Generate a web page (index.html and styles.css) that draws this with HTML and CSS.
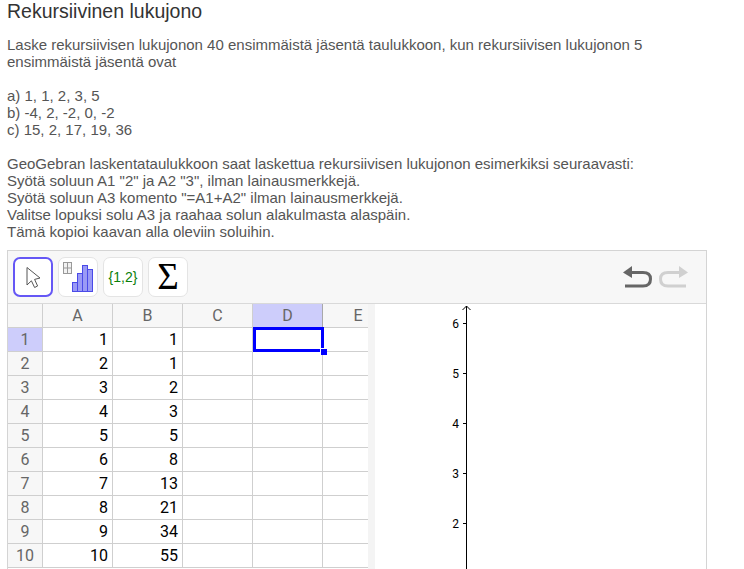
FILE: index.html
```html
<!DOCTYPE html>
<html lang="fi">
<head>
<meta charset="utf-8">
<title>Rekursiivinen lukujono</title>
<link rel="stylesheet" href="styles.css">
</head>
<body>
<h1 class="title">Rekursiivinen lukujono</h1>
<p class="para">Laske rekursiivisen lukujonon 40 ensimmäistä jäsentä taulukkoon, kun rekursiivisen lukujonon 5 ensimmäistä jäsentä ovat</p>
<p class="para">a) 1, 1, 2, 3, 5<br>b) -4, 2, -2, 0, -2<br>c) 15, 2, 17, 19, 36</p>
<p class="para">GeoGebran laskentataulukkoon saat laskettua rekursiivisen lukujonon esimerkiksi seuraavasti:<br>Syötä soluun A1 "2" ja A2 "3", ilman lainausmerkkejä.<br>Syötä soluun A3 komento "=A1+A2" ilman lainausmerkkejä.<br>Valitse lopuksi solu A3 ja raahaa solun alakulmasta alaspäin.<br>Tämä kopioi kaavan alla oleviin soluihin.</p>
<section class="applet">
  <div class="toolbar">
    <div class="tools">
      <button class="tool tool-active" aria-label="Move">
        <svg width="24" height="24" viewBox="0 0 24 24"><path d="M6 2.5 L6 20 L10.4 15.8 L13.6 22.5 L16.6 21 L13.6 14.4 L19 13 Z" fill="#fff" stroke="#555" stroke-width="1" stroke-linejoin="miter"/></svg>
      </button>
      <button class="tool" aria-label="Chart">
        <svg width="38" height="38" viewBox="0 0 38 38">
          <g fill="#f2f2f2" stroke="#999" stroke-width="1"><rect x="4.5" y="4.5" width="8" height="11"/><path d="M8.5 4.5V15.5M4.5 10H12.5"/></g>
          <g fill="#9a9af5" stroke="#4a4ae8" stroke-width="1"><rect x="13.5" y="24.5" width="5" height="9"/><rect x="18.5" y="15.5" width="5" height="18"/><rect x="23.5" y="7.5" width="5" height="26"/><rect x="28.5" y="11.5" width="5" height="22"/></g>
        </svg>
      </button>
      <button class="tool tool-list">{1,2}</button>
      <button class="tool tool-sum">Σ</button>
    </div>
    <div class="history">
      <svg width="30" height="26" viewBox="0 0 30 26"><path d="M9 8.5H21Q28.5 8.5 28.5 15Q28.5 22 21 22H3" fill="none" stroke="#666" stroke-width="3"/><path d="M1 8.5L10 2V14Z" fill="#666"/></svg>
      <svg width="30" height="26" viewBox="0 0 30 26"><path d="M21 8.5H9Q1.5 8.5 1.5 15Q1.5 22 9 22H27" fill="none" stroke="#d0d0d0" stroke-width="3"/><path d="M29 8.5L20 2V14Z" fill="#d0d0d0"/></svg>
    </div>
  </div>
  <div class="panes">
    <div class="sheet">
      <div class="row row-head">
        <div class="corner"></div><div class="ch">A</div><div class="ch">B</div><div class="ch">C</div><div class="ch ch-sel">D</div><div class="ch ch-last">E</div>
      </div>
      <div class="row"><div class="rh rh-sel">1</div><div class="c">1</div><div class="c">1</div><div class="c"></div><div class="c c-sel"></div><div class="c c-last"></div></div>
      <div class="row"><div class="rh">2</div><div class="c">2</div><div class="c">1</div><div class="c"></div><div class="c"></div><div class="c c-last"></div></div>
      <div class="row"><div class="rh">3</div><div class="c">3</div><div class="c">2</div><div class="c"></div><div class="c"></div><div class="c c-last"></div></div>
      <div class="row"><div class="rh">4</div><div class="c">4</div><div class="c">3</div><div class="c"></div><div class="c"></div><div class="c c-last"></div></div>
      <div class="row"><div class="rh">5</div><div class="c">5</div><div class="c">5</div><div class="c"></div><div class="c"></div><div class="c c-last"></div></div>
      <div class="row"><div class="rh">6</div><div class="c">6</div><div class="c">8</div><div class="c"></div><div class="c"></div><div class="c c-last"></div></div>
      <div class="row"><div class="rh">7</div><div class="c">7</div><div class="c">13</div><div class="c"></div><div class="c"></div><div class="c c-last"></div></div>
      <div class="row"><div class="rh">8</div><div class="c">8</div><div class="c">21</div><div class="c"></div><div class="c"></div><div class="c c-last"></div></div>
      <div class="row"><div class="rh">9</div><div class="c">9</div><div class="c">34</div><div class="c"></div><div class="c"></div><div class="c c-last"></div></div>
      <div class="row"><div class="rh">10</div><div class="c">10</div><div class="c">55</div><div class="c"></div><div class="c"></div><div class="c c-last"></div></div>
    </div>
    <div class="divider"></div>
    <div class="graph">
      <svg class="axis" width="40" height="265" viewBox="0 0 40 265">
        <path d="M31.5 2V265" stroke="#000" stroke-width="1" fill="none"/>
        <path d="M27.5 6L31.5 2L35.5 6" stroke="#000" stroke-width="1" fill="none"/>
        <path d="M28 19.5H31M28 69.5H31M28 119.5H31M28 169.5H31M28 219.5H31" stroke="#000" stroke-width="1"/>
        <text x="24" y="24" class="tick">6</text>
        <text x="24" y="74" class="tick">5</text>
        <text x="24" y="124" class="tick">4</text>
        <text x="24" y="174" class="tick">3</text>
        <text x="24" y="224" class="tick">2</text>
      </svg>
    </div>
  </div>
</section>
</body>
</html>
```
FILE: styles.css
```css
html, body {
  height: 569px;
  overflow: hidden;
}
body {
  margin: 0;
  padding: 0 0 0 7px;
  width: 737px;
  background: #fff;
  font-family: "Liberation Sans", Arial, sans-serif;
  color: #555;
  box-sizing: border-box;
}
.title {
  margin: 0;
  padding-top: 1px;
  font-size: 19.5px;
  line-height: 21px;
  font-weight: 400;
  color: #333;
}
.para {
  margin: 0 0 17px;
  width: 690px;
  font-size: 15px;
  line-height: 17px;
}
.title + .para {
  margin-top: 14px;
}
.applet {
  margin-top: -7px;
  width: 700px;
  border: 1px solid #d4d4d4;
  border-bottom: 0;
  box-sizing: border-box;
  background: #fff;
}
.toolbar {
  height: 52px;
  display: flex;
  align-items: center;
  justify-content: space-between;
  padding: 0 17px 0 5px;
  background: #f7f7f7;
  border-bottom: 1px solid #d9d9d9;
  box-sizing: content-box;
}
.tools {
  display: flex;
  gap: 5px;
}
.tool {
  width: 40px;
  height: 40px;
  padding: 0;
  display: flex;
  align-items: center;
  justify-content: center;
  background: #fff;
  border: 1px solid #e4e4e4;
  border-radius: 7px;
  box-sizing: border-box;
  font-family: "Liberation Sans", Arial, sans-serif;
}
.tool-active {
  border: 2px solid #6557f5;
}
.tool-list {
  font-size: 14px;
  color: #0a800a;
  font-family: "Liberation Sans", Arial, sans-serif;
}
.tool-sum {
  font-size: 37px;
  line-height: 36px;
  color: #000;
  font-family: "Liberation Serif", serif;
}
.history {
  display: flex;
  gap: 7px;
}
.panes {
  display: flex;
  height: 266px;
}
.sheet {
  width: 360px;
  flex: none;
  overflow: hidden;
}
.row {
  display: grid;
  grid-template-columns: 35px 70px 70px 70px 70px 45px;
  height: 24px;
}
.row-head {
  background: #f7f7f7;
}
.corner, .ch, .rh, .c {
  border-right: 1px solid #cfcfcf;
  border-bottom: 1px solid #cfcfcf;
  box-sizing: border-box;
  font-family: Roboto, "Liberation Sans", sans-serif;
  font-size: 16px;
  line-height: 23px;
}
.corner {
  background: #f7f7f7;
}
.ch {
  text-align: center;
  color: #666;
  background: #f7f7f7;
}
.ch-sel {
  background: #cdcdfb;
  border-right-color: #a9a9a9;
}
.ch-last {
  border-right: 0;
  padding-left: 25px;
}
.rh {
  text-align: center;
  color: #666;
  background: #f7f7f7;
}
.rh-sel {
  background: #cdcdfb;
}
.c {
  text-align: right;
  padding-right: 4px;
  color: #000;
  background: #fff;
}
.c-last {
  border-right: 0;
}
.c-sel {
  position: relative;
  border: 3px solid #0000ff;
  margin: -1px -1px 0 0;
  height: 25px;
  width: 71px;
  z-index: 1;
}
.c-sel::after {
  content: "";
  position: absolute;
  right: -6px;
  bottom: -6px;
  width: 6px;
  height: 6px;
  background: #0000ff;
  border: 1px solid #fff;
  border-width: 1px 0 0 1px;
}
.divider {
  width: 7px;
  flex: none;
  background: #f4f4f4;
}
.graph {
  flex: 1;
  position: relative;
  overflow: hidden;
  padding-left: 60px;
}
.axis {
  display: block;
}
.tick {
  font-family: Roboto, "Liberation Sans", sans-serif;
  font-size: 12px;
  fill: #000;
  text-anchor: end;
}
```
